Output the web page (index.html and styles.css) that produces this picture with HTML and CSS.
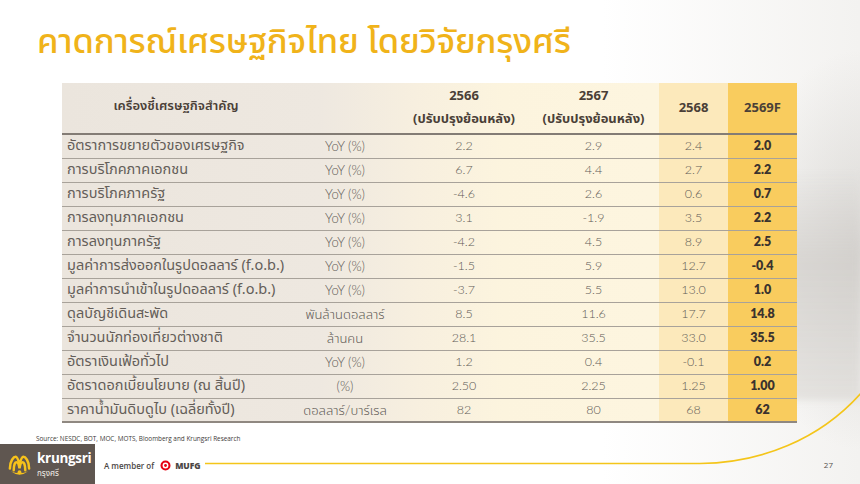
FILE: index.html
```html
<!DOCTYPE html>
<html lang="th">
<head>
<meta charset="utf-8">
<title>คาดการณ์เศรษฐกิจไทย โดยวิจัยกรุงศรี</title>
<link rel="stylesheet" href="styles.css">
</head>
<body>
<div class="slide">
  <div class="bg-photo"></div>
  <svg class="swoosh" width="860" height="484" viewBox="0 0 860 484">
    <path d="M205 463.5 L700 463.5 C760 463 820 440 862 392" fill="none" stroke="#f4c51a" stroke-width="1.6"/>
  </svg>
  <h1 class="title">คาดการณ์เศรษฐกิจไทย โดยวิจัยกรุงศรี</h1>
  <table class="econ">
    <colgroup>
      <col class="c-lbl"><col class="c-unit"><col class="c-66"><col class="c-67"><col class="c-68"><col class="c-69">
    </colgroup>
    <thead>
      <tr>
        <th class="lbl-h">เครื่องชี้เศรษฐกิจสำคัญ</th>
        <th></th>
        <th>2566<br>(ปรับปรุงย้อนหลัง)</th>
        <th>2567<br>(ปรับปรุงย้อนหลัง)</th>
        <th class="y68">2568</th>
        <th class="y69">2569F</th>
      </tr>
    </thead>
    <tbody>
      <tr><td class="lbl">อัตราการขยายตัวของเศรษฐกิจ</td><td class="unit">YoY (%)</td><td>2.2</td><td>2.9</td><td class="y68">2.4</td><td class="y69">2.0</td></tr>
      <tr><td class="lbl">การบริโภคภาคเอกชน</td><td class="unit">YoY (%)</td><td>6.7</td><td>4.4</td><td class="y68">2.7</td><td class="y69">2.2</td></tr>
      <tr><td class="lbl">การบริโภคภาครัฐ</td><td class="unit">YoY (%)</td><td>-4.6</td><td>2.6</td><td class="y68">0.6</td><td class="y69">0.7</td></tr>
      <tr><td class="lbl">การลงทุนภาคเอกชน</td><td class="unit">YoY (%)</td><td>3.1</td><td>-1.9</td><td class="y68">3.5</td><td class="y69">2.2</td></tr>
      <tr><td class="lbl">การลงทุนภาครัฐ</td><td class="unit">YoY (%)</td><td>-4.2</td><td>4.5</td><td class="y68">8.9</td><td class="y69">2.5</td></tr>
      <tr><td class="lbl">มูลค่าการส่งออกในรูปดอลลาร์ (f.o.b.)</td><td class="unit">YoY (%)</td><td>-1.5</td><td>5.9</td><td class="y68">12.7</td><td class="y69">-0.4</td></tr>
      <tr><td class="lbl">มูลค่าการนำเข้าในรูปดอลลาร์ (f.o.b.)</td><td class="unit">YoY (%)</td><td>-3.7</td><td>5.5</td><td class="y68">13.0</td><td class="y69">1.0</td></tr>
      <tr><td class="lbl">ดุลบัญชีเดินสะพัด</td><td class="unit">พันล้านดอลลาร์</td><td>8.5</td><td>11.6</td><td class="y68">17.7</td><td class="y69">14.8</td></tr>
      <tr><td class="lbl">จำนวนนักท่องเที่ยวต่างชาติ</td><td class="unit">ล้านคน</td><td>28.1</td><td>35.5</td><td class="y68">33.0</td><td class="y69">35.5</td></tr>
      <tr><td class="lbl">อัตราเงินเฟ้อทั่วไป</td><td class="unit">YoY (%)</td><td>1.2</td><td>0.4</td><td class="y68">-0.1</td><td class="y69">0.2</td></tr>
      <tr><td class="lbl">อัตราดอกเบี้ยนโยบาย (ณ สิ้นปี)</td><td class="unit">(%)</td><td>2.50</td><td>2.25</td><td class="y68">1.25</td><td class="y69">1.00</td></tr>
      <tr><td class="lbl">ราคาน้ำมันดิบดูไบ (เฉลี่ยทั้งปี)</td><td class="unit">ดอลลาร์/บาร์เรล</td><td>82</td><td>80</td><td class="y68">68</td><td class="y69">62</td></tr>
    </tbody>
  </table>
  <p class="source">Source: NESDC, BOT, MOC, MOTS, Bloomberg and Krungsri Research</p>
  <footer class="footer">
    <div class="brand">
      <svg class="emblem" width="25" height="25" viewBox="0 0 26 26">
        <g fill="none" stroke="#f7c21b" stroke-width="2.6" stroke-linecap="round">
          <path d="M3 16 C3 8 7 4 9 4 C11 4 12 8 13 12 C14 8 15 4 17 4 C19 4 23 8 23 16"/>
          <path d="M7 18 C7 12 8.5 9.5 10 9.5 C11.5 9.5 12.5 13 13 16 C13.5 13 14.5 9.5 16 9.5 C17.5 9.5 19 12 19 18"/>
        </g>
        <path d="M4 19 Q13 26 22 19 Q13 23 4 19Z" fill="#f7c21b"/>
        <circle cx="13" cy="20" r="2" fill="#f7c21b"/>
      </svg>
      <div class="brand-text">
        <span class="brand-en">krungsri</span>
        <span class="brand-th">กรุงศรี</span>
      </div>
    </div>
    <div class="member">
      <span>A member of</span>
      <svg class="mufg-mark" width="11" height="11" viewBox="0 0 11 11">
        <circle cx="5.5" cy="5.5" r="5" fill="#e60012"/>
        <circle cx="5.5" cy="5.5" r="2.9" fill="#fff"/>
        <circle cx="5.5" cy="5.5" r="1.4" fill="#e60012"/>
      </svg>
      <span class="mufg">MUFG</span>
    </div>
    <span class="page">27</span>
  </footer>
</div>
</body>
</html>
```
FILE: styles.css
```css
* { box-sizing: border-box; }
html, body { margin: 0; padding: 0; }
body {
  width: 860px;
  height: 484px;
  overflow: hidden;
  background: #ffffff;
  font-family: "Noto Sans Thai", "Noto Sans Thai UI", "Noto Sans", "DejaVu Sans", sans-serif;
  color: #4f4a46;
}
.slide {
  position: relative;
  width: 860px;
  height: 484px;
  display: flex;
  flex-direction: column;
  background:
    radial-gradient(ellipse 120px 200px at 860px 250px, rgba(200,197,193,0.55), rgba(255,255,255,0) 100%),
    linear-gradient(90deg, #ffffff 0%, #ffffff 70%, #f3f2f0 100%);
}
.bg-photo {
  position: absolute;
  left: 790px;
  top: 170px;
  width: 70px;
  height: 230px;
  background: linear-gradient(180deg, rgba(220,218,214,0) 0%, rgba(205,202,198,0.6) 40%, rgba(215,212,208,0.5) 100%);
  filter: blur(3px);
}
.swoosh {
  position: absolute;
  left: 0;
  top: 0;
  pointer-events: none;
}
.title {
  position: relative;
  margin: 20px 0 0 37px;
  font-size: 34.5px;
  line-height: 46px;
  font-weight: 500;
  color: #f0b31a;
  letter-spacing: -0.2px;
}
.econ {
  position: relative;
  margin: 17px 0 0 62px;
  width: 735px;
  border-collapse: collapse;
  table-layout: fixed;
  background: linear-gradient(90deg, #ebe5dd 0%, #eee8e0 35%, #f7efdf 48%, #fcf4de 60%, #fdf5df 80%);
}
.c-lbl { width: 228px; }
.c-unit { width: 110px; }
.c-66 { width: 128px; }
.c-67 { width: 131px; }
.c-68 { width: 69px; }
.c-69 { width: 69px; }
.econ th {
  height: 51px;
  padding: 0;
  font-size: 13px;
  font-weight: 700;
  line-height: 23px;
  color: #4a3f37;
  text-align: center;
  vertical-align: middle;
  border-bottom: 2px solid #837c75;
}
.econ th.lbl-h { font-size: 13px; font-weight: 600; padding-bottom: 4px; }
.econ td {
  height: 24px;
  padding: 0;
  text-align: center;
  vertical-align: middle;
  line-height: 20px;
  color: #615b56;
  border-bottom: 1px solid #a8a29a;
  font-family: "Lato", "Noto Sans Thai", "Noto Sans", sans-serif;
  font-size: 12.5px;
  font-weight: 300;
}
.econ td.unit { font-size: 13px; }
.econ td.lbl {
  text-align: left;
  padding-left: 5px;
  font-family: "Noto Sans Thai", "Lato", "Noto Sans", sans-serif;
  font-size: 14.5px;
  font-weight: 400;
  color: #645e59;
  white-space: nowrap;
}
.econ tbody tr:last-child td { border-bottom: 2px solid #8f8881; }
.econ .y68 { background: #fce9bb; }
.econ .y69 { background: #f9cc5e; }
.econ td.y69 { font-weight: 800; color: #3b332e; }
.source {
  position: relative;
  margin: 11px 0 0 36px;
  font-family: "Open Sans", "Liberation Sans", sans-serif;
  font-size: 6.4px;
  line-height: 10px;
  color: #3d3a38;
}
.footer {
  position: relative;
  margin-top: auto;
  height: 42px;
  display: flex;
  align-items: center;
}
.brand {
  width: 95px;
  height: 42px;
  flex: none;
  background: #5f5650;
  display: flex;
  align-items: center;
  gap: 5px;
  padding-left: 7px;
  overflow: hidden;
}
.emblem { flex: none; }
.brand-text {
  display: flex;
  flex-direction: column;
  gap: 5px;
  color: #ffffff;
}
.brand-en {
  font-family: "Open Sans", "Liberation Sans", sans-serif;
  font-weight: 700;
  font-size: 13.5px;
  line-height: 13px;
  letter-spacing: -0.3px;
}
.brand-th {
  font-size: 8px;
  line-height: 9px;
  color: #f3efe9;
}
.member {
  display: flex;
  align-items: center;
  gap: 4px;
  margin-left: 9px;
  font-family: "Open Sans", "Liberation Sans", sans-serif;
  font-size: 8px;
  font-weight: 600;
  color: #4b4745;
}
.mufg-mark { margin-left: 2px; }
.mufg {
  font-weight: 800;
  font-size: 8.5px;
  color: #4b4745;
}
.page {
  margin-left: auto;
  margin-right: 27px;
  margin-top: -2px;
  font-family: "Open Sans", "Liberation Sans", sans-serif;
  font-size: 8px;
  color: #55514e;
}
```
